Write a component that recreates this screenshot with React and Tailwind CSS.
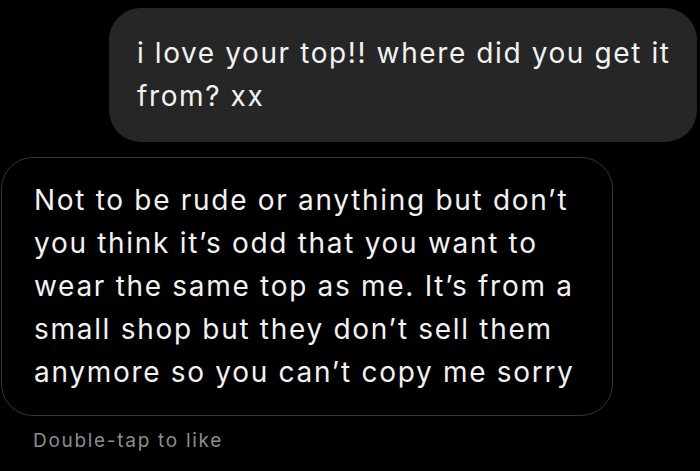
import React from 'react';

const font = { fontFamily: 'Inter, "Liberation Sans", Arial, sans-serif' };

const Bubble = ({ lines, className }) => (
  <div className={className}>
    {lines.map((line, i) => (
      <div key={i} className="whitespace-nowrap">{line}</div>
    ))}
  </div>
);

export default function App() {
  const sent = ['i love your top!! where did you get it', 'from? xx'];
  const reply = [
    'Not to be rude or anything but don’t',
    'you think it’s odd that you want to',
    'wear the same top as me. It’s from a',
    'small shop but they don’t sell them',
    'anymore so you can’t copy me sorry',
  ];

  return (
    <div
      className="w-[700px] h-[471px] bg-black overflow-hidden flex flex-col"
      style={font}
    >
      {/* outgoing message */}
      <div className="flex justify-end pt-[8px] pr-[3px]">
        <Bubble
          lines={sent}
          className="w-[588px] rounded-[32px] bg-[#262626] pl-[28px] py-[24px] text-[28px] leading-[43px] tracking-[1.6px] text-[#f2f2f2]"
        />
      </div>

      {/* incoming message */}
      <div className="mt-[15px] pl-[1px]">
        <Bubble
          lines={reply}
          className="w-[612px] rounded-[32px] border border-[#363636] bg-black pl-[32px] py-[21px] text-[28px] leading-[43px] tracking-[1.7px] text-[#f2f2f2]"
        />
      </div>

      <div className="mt-[13px] pl-[33px] text-[19px] leading-[24px] tracking-[1.7px] text-[#8c8c8c]">
        Double-tap to like
      </div>
    </div>
  );
}
